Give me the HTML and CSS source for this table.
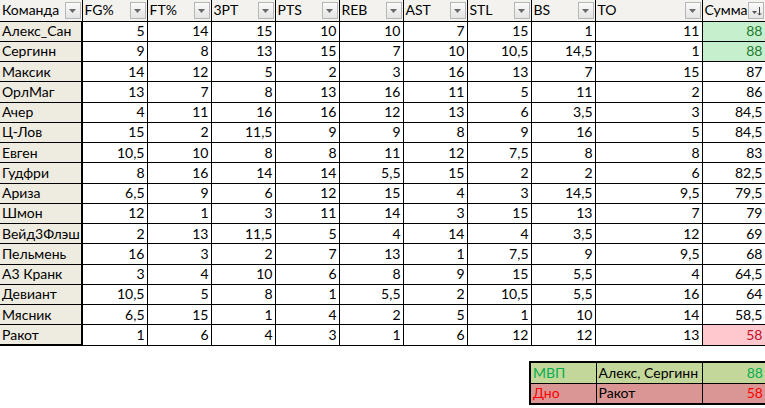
FILE: index.html
```html
<!DOCTYPE html>
<html lang="ru">
<head>
<meta charset="utf-8">
<link rel="stylesheet" href="styles.css">
</head>
<body>
<table class="sheet">
  <colgroup>
    <col class="c-name"><col class="c-fg"><col class="c-n"><col class="c-n"><col class="c-n"><col class="c-n"><col class="c-n"><col class="c-n"><col class="c-n"><col class="c-to"><col class="c-sum">
  </colgroup>
  <thead>
    <tr>
      <th><span class="lbl">Команда</span><span class="dd"><svg viewBox="0 0 7 4"><path d="M0 0h7L3.5 4z"/></svg></span></th>
      <th><span class="lbl">FG%</span><span class="dd"><svg viewBox="0 0 7 4"><path d="M0 0h7L3.5 4z"/></svg></span></th>
      <th><span class="lbl">FT%</span><span class="dd"><svg viewBox="0 0 7 4"><path d="M0 0h7L3.5 4z"/></svg></span></th>
      <th><span class="lbl">3PT</span><span class="dd"><svg viewBox="0 0 7 4"><path d="M0 0h7L3.5 4z"/></svg></span></th>
      <th><span class="lbl">PTS</span><span class="dd"><svg viewBox="0 0 7 4"><path d="M0 0h7L3.5 4z"/></svg></span></th>
      <th><span class="lbl">REB</span><span class="dd"><svg viewBox="0 0 7 4"><path d="M0 0h7L3.5 4z"/></svg></span></th>
      <th><span class="lbl">AST</span><span class="dd"><svg viewBox="0 0 7 4"><path d="M0 0h7L3.5 4z"/></svg></span></th>
      <th><span class="lbl">STL</span><span class="dd"><svg viewBox="0 0 7 4"><path d="M0 0h7L3.5 4z"/></svg></span></th>
      <th><span class="lbl">BS</span><span class="dd"><svg viewBox="0 0 7 4"><path d="M0 0h7L3.5 4z"/></svg></span></th>
      <th><span class="lbl">TO</span><span class="dd"><svg viewBox="0 0 7 4"><path d="M0 0h7L3.5 4z"/></svg></span></th>
      <th><span class="lbl">Сумма</span><span class="dd sort"><svg viewBox="0 0 14 14"><path d="M3 7h5L5.5 10z" fill="#555"/><path d="M10.5 3v8M8.8 9.2l1.7 1.9 1.7-1.9" stroke="#444" stroke-width="1" fill="none"/></svg></span></th>
    </tr>
  </thead>
  <tbody>
    <tr><td>Алекс_Сан</td><td>5</td><td>14</td><td>15</td><td>10</td><td>10</td><td>7</td><td>15</td><td>1</td><td>11</td><td class="good">88</td></tr>
    <tr><td>Сергинн</td><td>9</td><td>8</td><td>13</td><td>15</td><td>7</td><td>10</td><td>10,5</td><td>14,5</td><td>1</td><td class="good">88</td></tr>
    <tr><td>Максик</td><td>14</td><td>12</td><td>5</td><td>2</td><td>3</td><td>16</td><td>13</td><td>7</td><td>15</td><td>87</td></tr>
    <tr><td>ОрлМаг</td><td>13</td><td>7</td><td>8</td><td>13</td><td>16</td><td>11</td><td>5</td><td>11</td><td>2</td><td>86</td></tr>
    <tr><td>Ачер</td><td>4</td><td>11</td><td>16</td><td>16</td><td>12</td><td>13</td><td>6</td><td>3,5</td><td>3</td><td>84,5</td></tr>
    <tr><td>Ц-Лов</td><td>15</td><td>2</td><td>11,5</td><td>9</td><td>9</td><td>8</td><td>9</td><td>16</td><td>5</td><td>84,5</td></tr>
    <tr><td>Евген</td><td>10,5</td><td>10</td><td>8</td><td>8</td><td>11</td><td>12</td><td>7,5</td><td>8</td><td>8</td><td>83</td></tr>
    <tr><td>Гудфри</td><td>8</td><td>16</td><td>14</td><td>14</td><td>5,5</td><td>15</td><td>2</td><td>2</td><td>6</td><td>82,5</td></tr>
    <tr><td>Ариза</td><td>6,5</td><td>9</td><td>6</td><td>12</td><td>15</td><td>4</td><td>3</td><td>14,5</td><td>9,5</td><td>79,5</td></tr>
    <tr><td>Шмон</td><td>12</td><td>1</td><td>3</td><td>11</td><td>14</td><td>3</td><td>15</td><td>13</td><td>7</td><td>79</td></tr>
    <tr><td>Вейд3Флэш</td><td>2</td><td>13</td><td>11,5</td><td>5</td><td>4</td><td>14</td><td>4</td><td>3,5</td><td>12</td><td>69</td></tr>
    <tr><td>Пельмень</td><td>16</td><td>3</td><td>2</td><td>7</td><td>13</td><td>1</td><td>7,5</td><td>9</td><td>9,5</td><td>68</td></tr>
    <tr><td>А3 Кранк</td><td>3</td><td>4</td><td>10</td><td>6</td><td>8</td><td>9</td><td>15</td><td>5,5</td><td>4</td><td>64,5</td></tr>
    <tr><td>Девиант</td><td>10,5</td><td>5</td><td>8</td><td>1</td><td>5,5</td><td>2</td><td>10,5</td><td>5,5</td><td>16</td><td>64</td></tr>
    <tr><td>Мясник</td><td>6,5</td><td>15</td><td>1</td><td>4</td><td>2</td><td>5</td><td>1</td><td>10</td><td>14</td><td>58,5</td></tr>
    <tr class="last"><td>Ракот</td><td>1</td><td>6</td><td>4</td><td>3</td><td>1</td><td>6</td><td>12</td><td>12</td><td>13</td><td class="bad">58</td></tr>
  </tbody>
</table>

<table class="summary">
  <colgroup><col class="s1"><col class="s2"><col class="s3"></colgroup>
  <tr class="mvp"><td class="tag">МВП</td><td>Алекс, Сергинн</td><td class="val">88</td></tr>
  <tr class="bottom"><td class="tag">Дно</td><td>Ракот</td><td class="val">58</td></tr>
</table>
</body>
</html>
```

FILE: styles.css
```css
* { box-sizing: border-box; }
html, body { margin: 0; padding: 0; background: #ffffff; }
body {
  font-family: Lato, "Open Sans", sans-serif;
  font-size: 14px;
  color: #000;
  width: 765px;
  height: 408px;
  overflow: hidden;
}

.sheet {
  border-collapse: collapse;
  table-layout: fixed;
  width: 765px;
}
.c-name { width: 82px; }
.c-fg { width: 65px; }
.c-n { width: 64px; }
.c-to { width: 107px; }
.c-sum { width: 63px; }

.sheet th, .sheet td {
  border: 1px solid #000;
  padding: 0 2px;
  white-space: nowrap;
  overflow: hidden;
}
.sheet th {
  height: 21px;
  background: #f3f2ef;
  font-weight: normal;
  text-align: left;
  border-top: none;
  position: relative;
  padding-left: 2px;
  vertical-align: middle;
  line-height: 18px;
}
.sheet th:first-child, .sheet td:first-child { border-left: none; }
.sheet tbody tr { height: 20.25px; }
.sheet td {
  text-align: right;
  vertical-align: middle;
  line-height: 18px;
}
.sheet td:first-child {
  text-align: left;
  background: #eeece1;
  border-right: 2px solid #000;
}
.sheet tr.last td:first-child { border-bottom: 2px solid #000; }

.lbl { display: inline-block; }
.dd {
  position: absolute;
  right: 1px;
  top: 2px;
  width: 16px;
  height: 17px;
  border: 1px solid #b6b6b6;
  background: linear-gradient(#fafafa, #e4e4e4);
  display: flex;
  align-items: center;
  justify-content: center;
}
.dd svg { width: 7px; height: 4px; fill: #6a6a6a; }
.dd.sort svg { width: 14px; height: 14px; }

.good { background: #c6efce; color: #1e7b2e; }
.bad { background: #ffc7ce; color: #c0102a; }

.summary {
  border-collapse: collapse;
  table-layout: fixed;
  width: 236px;
  margin: 15px 0 0 529px;
  border: 2px solid #000;
}
.s1 { width: 66px; }
.s2 { width: 106px; }
.s3 { width: 64px; }
.summary td {
  border: 1px solid #000;
  height: 21px;
  padding: 0 2px;
  white-space: nowrap;
  line-height: 18px;
}
.summary .val { text-align: right; }
.mvp td { background: #c4d79b; }
.mvp .tag, .mvp .val { color: #00b050; }
.bottom td { background: #da9694; }
.bottom .tag, .bottom .val { color: #ff0000; }
```
